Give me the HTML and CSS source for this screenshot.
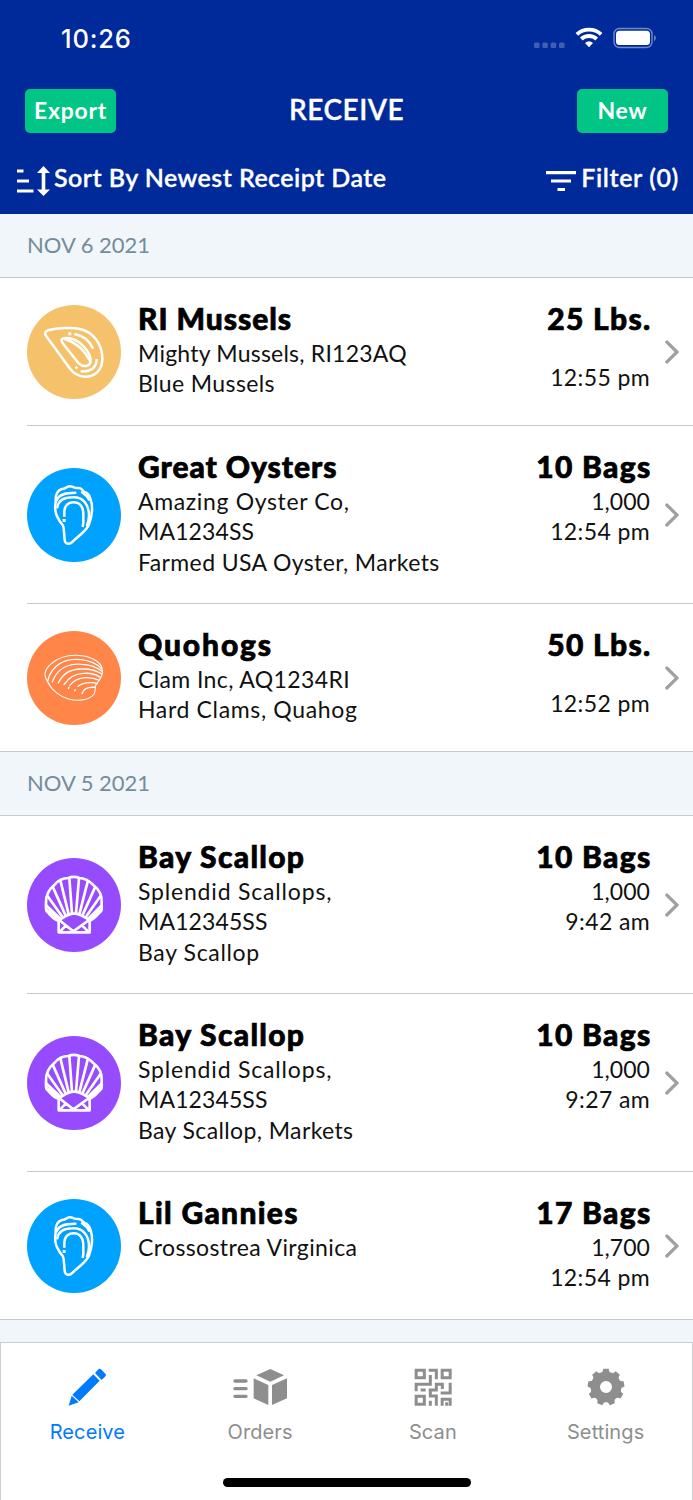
FILE: index.html
```html
<!DOCTYPE html>
<html lang="en">
<head>
<meta charset="utf-8">
<title>Receive</title>
<link rel="stylesheet" href="styles.css">
</head>
<body>
<svg class="sprite" aria-hidden="true">
  <symbol id="chevron" viewBox="0 0 14 24"><path d="M1.800 2L12 12L1.800 22" fill="none" stroke="#a0a0a0" stroke-width="3.200" stroke-linecap="round"/></symbol>
  <symbol id="mussel" viewBox="21 27 282 282">
    <g fill="none" stroke="#fff" stroke-width="7.500" stroke-linecap="round" stroke-linejoin="round">
      <path d="M84 103C112 96 153 93 180 99C220 108 247 145 247 188C247 222 225 243 193 242C175 241 160 232 149 217L79 121C73 113 74 106 84 103Z"/>
      <path d="M132 127C150 124 173 132 190 150C206 167 214 186 211 200C207 213 187 213 177 203L130 144C123 135 122 129 132 127Z"/>
      <path d="M134 129C162 137 190 158 209 193"/>
      <path d="M163 114C190 119 209 134 219 158M182 226C211 229 230 215 230 189" stroke-linecap="butt"/>
    </g>
    <path fill="#fff" d="M145 109h9v9h-9zM164 215l5-5 5 5-5 5z"/>
  </symbol>
  <symbol id="oyster" viewBox="21 24 282 282">
    <g fill="none" stroke="#fff" stroke-width="7.500" stroke-linecap="round" stroke-linejoin="round">
      <path d="M117 179C107 165 104 143 107 127C106 108 111 91 126 87C134 87 138 82 146 79C157 76 162 86 174 84C183 82 188 91 193 96C205 99 210 109 212 119C219 138 217 169 207 193C202 211 172 230 158 245C149 255 135 253 134 240L131 204C130 191 120 191 117 179Z"/>
      <path d="M110 121C117 102 137 98 166 98M112 142C116 118 138 112 158 112C190 111 207 134 207 167C207 178 204 188 201 196"/>
      <path d="M133 170V160C132 137 145 127 161 127C180 127 191 141 190 166V188L188 201" stroke-linecap="butt"/>
      <path d="M186 97C195 103 203 110 207 119"/>
    </g>
    <path fill="#fff" d="M128 177h9v9h-9z"/>
  </symbol>
  <symbol id="clam" viewBox="21 24 282 282">
    <g fill="none" stroke="#fff" stroke-width="3.200" stroke-linecap="round" stroke-linejoin="round">
      <path d="M83 176C69 157 74 139 94 122C121 98 155 94 187 98C221 103 247 122 246 139C249 146 247 154 245 158C240 172 233 176 226 189C225 199 227 205 222 213C207 233 173 235 146 228C119 221 93 199 83 176Z"/>
      <path d="M83 174C94 126 135 104 184 110C210 113 231 123 245 137M97 177C111 138 144 121 185 124C212 124 229 132 246 145M115 180C129 150 154 137 187 138C212 137 230 143 246 153M132 185C147 161 164 152 191 151C213 150 227 153 241 163M149 188C162 171 176 165 196 164C215 163 226 166 238 172M174 190C184 182 196 179 209 179C219 178 227 180 232 182M186 212C190 198 203 191 225 193M166 200L164 204M147 193L145 197" stroke-width="4"/>
    </g>
  </symbol>
  <symbol id="scallop" viewBox="21 24 282 282">
    <g fill="none" stroke="#fff" stroke-width="8" stroke-linecap="round" stroke-linejoin="round">
      <path d="M116 212C98 208 91 193 80 184C76 178 79 165 78 157C77 133 91 115 103 105C116 89 132 84 145 84C155 80 168 80 178 84C193 84 207 92 220 105C234 116 247 134 245 158C244 169 248 178 243 184C232 193 224 208 208 212"/>
      <path d="M116 210V247H209V210C196 204 181 190 162 191C143 190 131 204 116 210ZM121 213L160 244L203 213M118 247L137 227M207 247L187 227"/>
      <path d="M148 84L156 190M177 84L168 190M122 95L146 193M203 95L178 193M99 112L137 197M225 112L187 197M83 139L128 202M241 139L197 202M78 166L122 207M245 166L204 207M80 180L116 208M243 180L209 208"/>
    </g>
  </symbol>
</svg>

<main class="phone">
  <header class="header">
    <div class="status">
      <span class="clock">10:26</span>
      <svg class="status-icons" viewBox="0 0 124 24" width="124" height="24">
        <g fill="#fff" fill-opacity=".25"><rect x="1" y="15.500" width="5.600" height="5.600" rx="1.500"/><rect x="9.300" y="15.500" width="5.600" height="5.600" rx="1.500"/><rect x="17.600" y="15.500" width="5.600" height="5.600" rx="1.500"/><rect x="26" y="15.500" width="5.600" height="5.600" rx="1.500"/></g>
        <g fill="none" stroke="#fff" stroke-width="3.800"><path d="M43.900 7.300C50.500 1 61.500 1 68.100 7.300"/><path d="M48.300 12C52.500 8 59.500 8 63.700 12"/></g>
        <path d="M52 16.100Q56 12.600 60 16.100L56 20.300Z" fill="#fff"/>
        <rect x="81" y="1.500" width="38" height="19" rx="5.500" fill="none" stroke="#fff" stroke-opacity=".45" stroke-width="1.400"/>
        <rect x="83" y="3.800" width="34" height="14.300" rx="3.500" fill="#fff"/>
        <path d="M121.200 8Q124.500 11 121.200 14.300Z" fill="#fff" fill-opacity=".5"/>
      </svg>
    </div>
    <div class="nav">
      <button class="btn export">Export</button>
      <h1 class="screen-title">RECEIVE</h1>
      <button class="btn new">New</button>
    </div>
    <div class="tools">
      <div class="tool">
        <svg width="36" height="32" viewBox="0 0 36 32"><path d="M1 6H7.500M1 16H13M1 26H17.500" stroke="#fff" stroke-width="3.200"/><path d="M27.500 5V27" stroke="#fff" stroke-width="3.600"/><path d="M21 8L27.500 1L34 8ZM21 24.500L27.500 31L34 24.500Z" fill="#fff"/></svg>
        <span class="sort-label">Sort By Newest Receipt Date</span>
      </div>
      <div class="tool">
        <svg class="filter-icon" width="30" height="22" viewBox="0 0 30 22"><path d="M0 2.600H30M5 11H25M11.500 19.500H19" stroke="#fff" stroke-width="3.200"/></svg>
        <span class="filter-label">Filter (0)</span>
      </div>
    </div>
  </header>

  <section class="group">
    <h2 class="date">NOV 6 2021</h2>
    <article class="row">
      <svg class="avatar gold"><use href="#mussel"/></svg>
      <div class="info"><h3 class="name snug">RI Mussels</h3><p class="tight">Mighty Mussels, RI123AQ</p><p>Blue Mussels</p></div>
      <div class="amount lbs"><strong class="qty">25 Lbs.</strong><p>12:55 pm</p></div>
      <svg class="chevron"><use href="#chevron"/></svg>
    </article>
    <article class="row">
      <svg class="avatar blue"><use href="#oyster"/></svg>
      <div class="info"><h3 class="name snug">Great Oysters</h3><p class="wide">Amazing Oyster Co,</p><p class="code">MA1234SS</p><p>Farmed USA Oyster, Markets</p></div>
      <div class="amount"><strong class="qty">10 Bags</strong><p class="count">1,000</p><p>12:54 pm</p></div>
      <svg class="chevron"><use href="#chevron"/></svg>
    </article>
    <article class="row">
      <svg class="avatar orange"><use href="#clam"/></svg>
      <div class="info"><h3 class="name loose">Quohogs</h3><p>Clam Inc, AQ1234RI</p><p class="wide">Hard Clams, Quahog</p></div>
      <div class="amount lbs"><strong class="qty">50 Lbs.</strong><p>12:52 pm</p></div>
      <svg class="chevron"><use href="#chevron"/></svg>
    </article>
  </section>

  <section class="group">
    <h2 class="date">NOV 5 2021</h2>
    <article class="row">
      <svg class="avatar purple"><use href="#scallop"/></svg>
      <div class="info"><h3 class="name">Bay Scallop</h3><p class="wider">Splendid Scallops,</p><p class="code">MA12345SS</p><p class="wide">Bay Scallop</p></div>
      <div class="amount"><strong class="qty">10 Bags</strong><p class="count">1,000</p><p>9:42 am</p></div>
      <svg class="chevron"><use href="#chevron"/></svg>
    </article>
    <article class="row">
      <svg class="avatar purple"><use href="#scallop"/></svg>
      <div class="info"><h3 class="name">Bay Scallop</h3><p class="wider">Splendid Scallops,</p><p class="code">MA12345SS</p><p>Bay Scallop, Markets</p></div>
      <div class="amount"><strong class="qty">10 Bags</strong><p class="count">1,000</p><p>9:27 am</p></div>
      <svg class="chevron"><use href="#chevron"/></svg>
    </article>
    <article class="row">
      <svg class="avatar blue"><use href="#oyster"/></svg>
      <div class="info"><h3 class="name">Lil Gannies</h3><p>Crossostrea Virginica</p></div>
      <div class="amount"><strong class="qty">17 Bags</strong><p class="count">1,700</p><p>12:54 pm</p></div>
      <svg class="chevron"><use href="#chevron"/></svg>
    </article>
  </section>
  <div class="next-group"></div>

  <nav class="tabs">
    <div class="tab-list">
      <a class="tab active">
        <svg width="38" height="38" viewBox="205 204 114 114" fill="currentColor"><path d="M281 223L300 242L239 304L218 284ZM216 287L237 307L207 317ZM286 219L295 209Q299 204 304 208L317 221Q321 225 316 230L306 240Z"/></svg>
        <span>Receive</span>
      </a>
      <a class="tab">
        <svg width="54" height="38" viewBox="700 203 162 114" fill="currentColor"><path d="M812 206L853 225L812 244L770 225ZM762 234L806 254V314L762 294ZM862 234L817 254V314L862 294Z"/><path d="M706 242H739M706 265H739M706 288H739" stroke="currentColor" stroke-width="10" stroke-linecap="round"/></svg>
        <span>Orders</span>
      </a>
      <a class="tab">
        <svg width="38" height="38" viewBox="214 204 114 114" fill="none" stroke="currentColor" stroke-width="9"><path d="M220.500 210.500H245V233.500H220.500ZM298.500 210.500H322.500V233.500H298.500ZM220.500 289H245V312.500H220.500ZM258 210.500H281V238M263 225V252.500H220.500V274M234 270H249M258 270H281V252.500H299V267M263 270V288H281V317M263 302V317M322.500 248V279H294M298.500 317V297.500H322.500V317M312 307V317"/></svg>
        <span>Scan</span>
      </a>
      <a class="tab">
        <svg width="38" height="38" viewBox="-57 -57 114 114">
          <circle r="32" fill="none" stroke="currentColor" stroke-width="28"/>
          <g fill="currentColor"><path id="tooth" d="M-13 -43Q-9 -46 -8 -55H8Q9 -46 13 -43Z"/><use href="#tooth" transform="rotate(40)"/><use href="#tooth" transform="rotate(80)"/><use href="#tooth" transform="rotate(120)"/><use href="#tooth" transform="rotate(160)"/><use href="#tooth" transform="rotate(200)"/><use href="#tooth" transform="rotate(240)"/><use href="#tooth" transform="rotate(280)"/><use href="#tooth" transform="rotate(320)"/></g>
        </svg>
        <span>Settings</span>
      </a>
    </div>
    <div class="home-indicator"></div>
  </nav>
</main>
</body>
</html>
```
FILE: styles.css
```css
* { box-sizing: border-box; margin: 0; padding: 0; }
body { background: #fff; }
.sprite { display: none; }
.phone {
  width: 693px;
  height: 1500px;
  display: flex;
  flex-direction: column;
  overflow: hidden;
  font-family: Lato, "Open Sans", sans-serif;
  color: #000;
}

/* Header */
.header { height: 214px; background: #002a9a; color: #fff; flex: none; }
.status { height: 76px; display: flex; justify-content: space-between; align-items: center; padding: 2px 36px 0 61px; }
.clock { font: 500 25.500px/30px Inter, sans-serif; letter-spacing: 0.800px; }
.nav { height: 68px; display: flex; justify-content: space-between; align-items: center; padding: 1px 25px 0; }
.btn {
  width: 91px;
  height: 44px;
  border: 0;
  border-radius: 5px;
  background: #00c584;
  color: #fff;
  font: 700 23px/42px Lato, sans-serif;
  letter-spacing: 0.700px;
  padding-bottom: 2px;
}
.screen-title { font-size: 28px; font-weight: 600; line-height: 34px; letter-spacing: 0.500px; padding-bottom: 4px; -webkit-text-stroke: 0.300px currentColor; }
.tools { height: 70px; display: flex; justify-content: space-between; padding: 17px 14px 0 16px; }
.tool { height: 36px; display: flex; align-items: center; }
.sort-label, .filter-label { font-size: 25px; font-weight: 600; line-height: 34px; padding-bottom: 5px; white-space: nowrap; letter-spacing: 0.440px; -webkit-text-stroke: 0.300px currentColor; }
.sort-label { margin-left: 2px; }
.filter-label { letter-spacing: 0.600px; }
.tool svg { margin-top: 4px; }
.filter-icon { margin-right: 5px; }

/* Receipt list */
.group { flex: none; }
.date {
  height: 64px;
  padding-left: 27px;
  background: #f1f6fa;
  border-bottom: 1px solid #c8c9cc;
  color: #748c9b;
  font-size: 22px;
  font-weight: 400;
  line-height: 62px;
}
.group + .group .date { border-top: 1px solid #c8c9cc; height: 65px; }
.row {
  display: flex;
  align-items: center;
  min-height: 148px;
  margin-left: 27px;
  padding: 21px 14px 26px 0;
  border-bottom: 1px solid #c8c9cc;
}
.row:last-child { border-bottom: 0; min-height: 147px; padding-bottom: 25px; }
.avatar { width: 94px; height: 94px; border-radius: 50%; flex: none; margin-top: 6px; }
.gold { background: #f5c26b; }
.blue { background: #00a2ff; }
.orange { background: #ff8548; }
.purple { background: #964bff; }
.info { flex: 1; margin-left: 17px; align-self: flex-start; }
.info p, .amount p { font-size: 23px; line-height: 30.330px; letter-spacing: 0.380px; color: #111; }
.info .tight { letter-spacing: 0.220px; }
.info .wide { letter-spacing: 0.650px; }
.info .wider { letter-spacing: 0.820px; }
.info .code { letter-spacing: 0.100px; }
.amount .count { letter-spacing: 0.050px; }
.name, .qty { display: block; font-size: 30px; font-weight: 900; line-height: 39px; letter-spacing: 1.300px; -webkit-text-stroke: 0.700px currentColor; }
.name.snug { letter-spacing: 0.950px; }
.name.loose { letter-spacing: 1.850px; }
.amount { align-self: flex-start; text-align: right; }
.amount .qty { margin-right: -1.500px; }
.amount.lbs .qty { margin-bottom: 24px; }
.chevron { width: 14px; height: 24px; flex: none; margin: 6px 0 0 15px; }
.next-group { flex: 1; background: #f1f6fa; border-top: 1px solid #c8c9cc; }

/* Tab bar */
.tabs { height: 158px; flex: none; background: #fff; border: 1px solid #cdcdd1; border-bottom: 0; padding-top: 25px; }
.tab-list { display: grid; grid-template-columns: repeat(4, 1fr); }
.tab { display: flex; flex-direction: column; align-items: center; gap: 11px; color: #8e8e8e; font: 400 20px/30px Inter, sans-serif; letter-spacing: 0.100px; }
.tab.active { color: #007aff; }
.home-indicator { width: 248px; height: 9px; margin: 31px auto 0; border-radius: 5px; background: #000; }
```
